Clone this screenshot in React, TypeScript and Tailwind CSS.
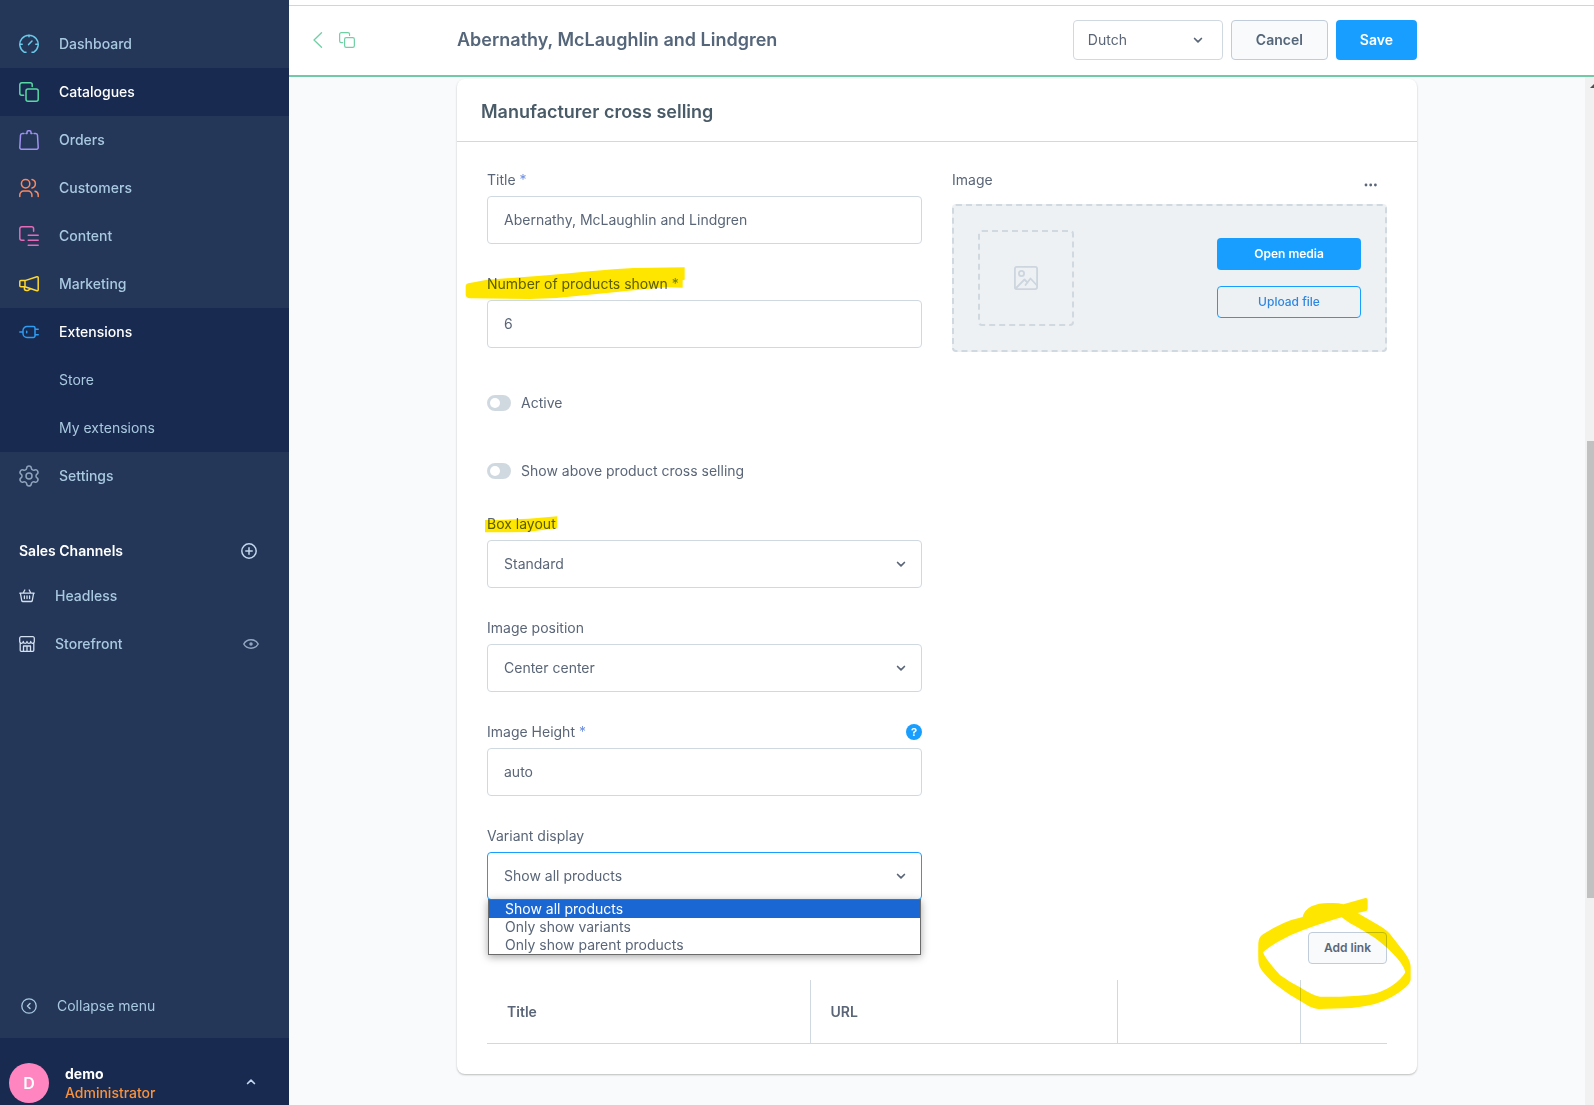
import React, { useState } from 'react';
import { Settings } from 'lucide-react';

const navItem = "flex h-12 items-center gap-5 pl-[19px] text-sm font-medium";

function Icon(props: { children: any, className?: string, box?: string }) {
    return (
        <svg
            viewBox={props.box || "0 0 20 20"}
            fill="none"
            stroke="currentColor"
            strokeWidth="1.5"
            strokeLinecap="round"
            strokeLinejoin="round"
            aria-hidden="true"
            className={`shrink-0 ${props.className || "size-5"}`}
        >
            {props.children}
        </svg>
    );
}

function DashboardIcon() {
    return (
        <Icon>
            <path d="M7 18.3H5.4a9.200 9.200 0 1 1 9.200 0H13M10 1v1.800M1 10.200h2.200M16.800 10.200H19M9.600 10.600 13 7" />
        </Icon>
    );
}

function CopyIcon(props: { className?: string }) {
    return (
        <Icon className={props.className}>
            <rect x="7" y="7" width="12.200" height="12.200" rx="2" />
            <path d="M4.600 13.200H2.800a2 2 0 0 1-2-2V2.800a2 2 0 0 1 2-2h8.400a2 2 0 0 1 2 2v1.600" />
        </Icon>
    );
}

function OrdersIcon() {
    return (
        <Icon>
            <path d="M5 3.500H3.400A1.900 1.900 0 0 0 1.500 5.300L.8 17.300a1.900 1.900 0 0 0 1.900 2h14.600a1.900 1.900 0 0 0 1.900-2L18.500 5.300a1.900 1.900 0 0 0-1.900-1.800H15M7 3.500h1V2.200A1.400 1.400 0 0 1 9.400.8h1.200A1.400 1.400 0 0 1 12 2.200v1.300h1" />
        </Icon>
    );
}

function CustomersIcon() {
    return (
        <Icon>
            <circle cx="6.600" cy="5.800" r="4.200" />
            <path d="M.8 18.600v-1.800a3.700 3.700 0 0 1 3.700-3.700h4.700a3.700 3.700 0 0 1 3.700 3.700v1.800M13 1.600a4.300 4.300 0 0 1 0 8.400M16 13.200a3.900 3.900 0 0 1 3.200 3.800v1.600" />
        </Icon>
    );
}

function ContentIcon() {
    return (
        <Icon>
            <path d="M5 14.200H2.800a2 2 0 0 1-2-2V2.800a2 2 0 0 1 2-2h9.800a2 2 0 0 1 2 2v2.500M9.200 9.200h10M9.200 14.200h10M9.200 19.200h10" />
        </Icon>
    );
}

function MarketingIcon() {
    return (
        <Icon>
            <path d="M6 6.600 17.900 2.700a1 1 0 0 1 1.300 1v12a1 1 0 0 1-1.300 1L6 12.800zM6 6.600H1.800a1 1 0 0 0-1 1v4.200a1 1 0 0 0 1 1H6M5.400 13v1.600a1.900 1.900 0 0 0 1.900 1.900h1.600a1.900 1.900 0 0 0 1.700-1.900" />
        </Icon>
    );
}

function PlugIcon() {
    return (
        <Icon>
            <path d="M.8 10H4M8 4.500h6.500a1.500 1.500 0 0 1 1.500 1.500v8a1.500 1.500 0 0 1-1.500 1.500H8a4 4 0 0 1-4-4v-3a4 4 0 0 1 4-4zM16 7.300h3.200M16 12.700h3.200M7.700 9.200v1.600" />
        </Icon>
    );
}

function BasketIcon() {
    return (
        <Icon box="0 0 16 16" className="size-4">
            <path strokeWidth="1.300" d="M.8 5.200h14.400M1.400 5.200l1.300 7.300a1.300 1.300 0 0 0 1.300 1h8a1.300 1.300 0 0 0 1.300-1l1.300-7.300M4.200 5 5.800 2M11.800 5 10.200 2M5.400 8v2.500M8 8v2.500M10.600 8v2.500" />
        </Icon>
    );
}

function StoreIcon() {
    return (
        <Icon box="0 0 16 16" className="size-4">
            <path strokeWidth="1.300" d="M.7 5.500V2.200A1.500 1.500 0 0 1 2.200.7h11.600a1.500 1.500 0 0 1 1.500 1.500v3.300a1.800 1.800 0 0 1-3.600 0 1.800 1.800 0 0 1-3.700 0 1.800 1.800 0 0 1-3.700 0 1.800 1.800 0 0 1-3.600 0zM1.200 7v7.300a1 1 0 0 0 1 1h11.600a1 1 0 0 0 1-1V7M4.500 15.200V10h7v5.200M8 10v5.200" />
        </Icon>
    );
}

function Chevron(props: { className?: string }) {
    return (
        <svg viewBox="0 0 12 12" fill="none" stroke="currentColor" strokeWidth="1.7" strokeLinecap="round" strokeLinejoin="round" aria-hidden="true" className={props.className}>
            <path d="M2.600 4.500 6 7.900l3.400-3.400" />
        </svg>
    );
}

const mainNav = [
    { label: "Dashboard", icon: DashboardIcon, color: "text-[#6ac8e8]" },
    { label: "Catalogues", icon: CopyIcon, color: "text-[#57d9a3]", active: true },
    { label: "Orders", icon: OrdersIcon, color: "text-[#a092f0]" },
    { label: "Customers", icon: CustomersIcon, color: "text-[#f88962]" },
    { label: "Content", icon: ContentIcon, color: "text-[#e56ab8]" },
    { label: "Marketing", icon: MarketingIcon, color: "text-[#ffd92e]" },
];

function Sidebar() {
    return (
        <aside className="flex w-[289px] shrink-0 flex-col bg-[#243758] text-[#a9c9e0]">
            <nav className="pt-5">
                {mainNav.map(({ label, icon: NavIcon, color, active }) => (
                    <a key={label} href="#" className={`${navItem} ${active ? "bg-[#182a4f] text-white" : ""}`}>
                        <span className={color}><NavIcon /></span>
                        {label}
                    </a>
                ))}
                <div className="bg-[#182a4f]">
                    <a href="#" className={`${navItem} text-white`}>
                        <span className="text-[#2f9cf4]"><PlugIcon /></span>
                        Extensions
                    </a>
                    <a href="#" className="flex h-12 items-center pl-[59px] text-sm">Store</a>
                    <a href="#" className="flex h-12 items-center pl-[59px] text-sm">My extensions</a>
                </div>
                <a href="#" className={navItem}>
                    <Settings className="-m-0.5 size-6 text-[#8fa3bb]" strokeWidth={1.5} />
                    Settings
                </a>
            </nav>

            <section className="pt-[27px] pl-[19px]">
                <div className="flex h-12 items-center justify-between pr-8">
                    <h2 className="text-sm font-semibold text-white">Sales Channels</h2>
                    <button type="button" aria-label="Add sales channel" className="text-[#c3d7ee]">
                        <Icon box="0 0 16 16" className="size-4">
                            <circle cx="8" cy="8" r="7.200" />
                            <path d="M8 4.800v6.400M4.800 8h6.400" />
                        </Icon>
                    </button>
                </div>
                <a href="#" className="-mt-[3px] flex h-12 items-center gap-5 text-sm font-medium">
                    <span className="text-[#d3e0f0]"><BasketIcon /></span>
                    Headless
                </a>
                <a href="#" className="flex h-12 items-center gap-5 pr-[30px] text-sm font-medium">
                    <span className="text-[#d3e0f0]"><StoreIcon /></span>
                    <span className="grow">Storefront</span>
                    <Icon box="0 0 16 16" className="size-4 text-[#93a8c2]">
                        <path d="M.8 8c3-5.600 11.400-5.600 14.400 0-3 5.600-11.400 5.600-14.400 0z" />
                        <circle cx="8" cy="8" r="1" fill="currentColor" />
                    </Icon>
                </a>
            </section>

            <button type="button" className="mt-auto flex h-16 items-center gap-5 pl-[21px] text-sm">
                <Icon box="0 0 16 16" className="size-4">
                    <circle cx="8" cy="8" r="7.200" strokeWidth="1.300" />
                    <path d="M9 5.500 6.500 8 9 10.500" />
                </Icon>
                Collapse menu
            </button>
            <footer className="flex h-[67px] items-end bg-[#182a4f] pb-0.5 pl-[9px]">
                <div className="flex size-10 items-center justify-center rounded-full bg-[#ff85c0] font-semibold text-white">D</div>
                <div className="grow pb-px pl-4 text-sm leading-[19px]">
                    <p className="font-bold text-white">demo</p>
                    <p className="font-medium text-[#f8923d]">Administrator</p>
                </div>
                <button type="button" aria-label="User menu" className="mr-8 self-center pt-[22px] text-[#c3d7ee]">
                    <Chevron className="size-3 rotate-180" />
                </button>
            </footer>
        </aside>
    );
}

function Header(props: { title: string }) {
    return (
        <header className="flex h-[77px] shrink-0 flex-col border-b-2 border-[#72c9a8] bg-white">
            <div className="h-[6px] shrink-0 border-b border-[#d1d5da]" />
            <div className="grid grow grid-cols-[1fr_minmax(0,960px)_1fr] items-center pr-[9px] pb-px">
                <div className="flex gap-4 pl-6 text-[#6fd0a4]">
                    <a href="#" aria-label="Back">
                        <Icon box="0 0 10 16" className="h-4 w-2.5"><path strokeWidth="1.300" d="M8.500.8 1 8l7.500 7.200" /></Icon>
                    </a>
                    <CopyIcon className="size-4" />
                </div>
                <div className="flex items-center gap-2">
                    <h1 className="grow text-lg font-semibold text-[#55667a]">{props.title}</h1>
                    <div className="relative text-[#5a6678]">
                        <select aria-label="Language" className="block h-10 w-[150px] appearance-none rounded border border-[#d1d9e0] bg-white pl-3.5 text-sm">
                            <option>Dutch</option>
                        </select>
                        <Chevron className="pointer-events-none absolute top-3.5 right-[19px] size-3" />
                    </div>
                    <button type="button" className="h-10 rounded border border-[#c0ccd9] bg-[#f8fafc] px-6 text-sm font-semibold text-[#55667a]">Cancel</button>
                    <button type="button" className="h-10 rounded bg-[#189eff] px-6 text-sm font-semibold text-white">Save</button>
                </div>
            </div>
        </header>
    );
}

// Marker strokes are multiplied over the text below them
function Marker(props: { d: string, box: string, className: string }) {
    return (
        <svg viewBox={props.box} fill="#ffe600" aria-hidden="true" className={`pointer-events-none absolute max-w-none mix-blend-multiply ${props.className}`}>
            <path fillRule="evenodd" d={props.d} />
        </svg>
    );
}

function Field(props: { id: string, label: string, required?: boolean, help?: boolean, marker?: any, children: any }) {
    return (
        <div className="flex flex-col gap-2">
            <div className="relative flex h-4 items-center justify-between">
                <label htmlFor={props.id} className="text-sm leading-4">
                    {props.label}
                    {props.required && <span className="text-[#6f8fe0]"> *</span>}
                </label>
                {props.help && (
                    <button type="button" aria-label="Help" className="flex size-4 items-center justify-center rounded-full bg-[#189eff] text-[11px] font-bold text-white">?</button>
                )}
                {props.marker}
            </div>
            {props.children}
        </div>
    );
}

function TextInput(props: { id: string, value: string }) {
    const [value, setValue] = useState(props.value);
    return (
        <input
            id={props.id}
            type="text"
            value={value}
            onChange={(e) => setValue(e.target.value)}
            className="h-12 w-full rounded border border-[#d1d9e0] bg-white px-4 pb-0.5 text-sm outline-none"
        />
    );
}

function SelectInput(props: { id: string, options: string[], open?: boolean }) {
    return (
        <div className="relative">
            <select
                id={props.id}
                className={`block h-12 w-full appearance-none rounded border bg-white px-4 text-sm outline-none ${props.open ? "border-[#189eff]" : "border-[#d1d9e0]"}`}
            >
                {props.options.map((option) => <option key={option}>{option}</option>)}
            </select>
            <Chevron className="pointer-events-none absolute top-[18px] right-[15px] size-3" />
            {props.open && (
                <ul role="listbox" className="absolute inset-x-px top-[47px] z-10 border border-[#6b6b6b] bg-white text-sm leading-[18px] shadow-[0_2px_8px_rgba(0,0,0,0.35)]">
                    {props.options.map((option, i) => (
                        <li key={option} role="option" aria-selected={i === 0} className={i === 0 ? "bg-[#1a66d2] px-4 text-white" : "px-4"}>{option}</li>
                    ))}
                </ul>
            )}
        </div>
    );
}

function Toggle(props: { label: string }) {
    return (
        <label className="flex h-4 items-center gap-2.5 text-sm">
            <input
                type="checkbox"
                role="switch"
                className="h-4 w-6 appearance-none rounded-full bg-[#d1d9e0] before:m-[3px] before:block before:size-2.5 before:rounded-full before:bg-white checked:bg-[#37d046] checked:before:ml-[11px]"
            />
            {props.label}
        </label>
    );
}

function MediaUpload() {
    return (
        <div className="flex flex-col">
            <div className="flex h-8 justify-between text-sm leading-4">
                <span>Image</span>
                <button type="button" aria-label="Media options" className="mr-2 h-6 pt-0.5">
                    <svg viewBox="0 0 16 16" fill="currentColor" className="size-4">
                        <circle cx="3" cy="8" r="1.400" />
                        <circle cx="7.700" cy="8" r="1.400" />
                        <circle cx="12.400" cy="8" r="1.400" />
                    </svg>
                </button>
            </div>
            <div className="flex items-center justify-between rounded border-2 border-dashed border-[#d1d9e0] bg-[#edf1f4] p-6">
                <div className="flex size-24 items-center justify-center rounded border-2 border-dashed border-[#d1d9e0] text-[#cdd5de]">
                    <Icon box="0 0 24 24" className="size-6">
                        <g strokeWidth="1.800">
                            <rect x=".9" y=".9" width="22.200" height="22.200" rx="2" />
                            <circle cx="7.500" cy="7.500" r="2.600" />
                            <path d="m1.500 22.500 9-9 3 3M11.500 19l5-6.500 6.500 7" />
                        </g>
                    </Icon>
                </div>
                <div className="flex w-36 flex-col gap-4">
                    <button type="button" className="h-8 rounded bg-[#189eff] text-xs font-semibold text-white">Open media</button>
                    <button type="button" className="h-8 rounded border border-[#189eff] text-xs font-medium text-[#2f86e0]">Upload file</button>
                </div>
            </div>
        </div>
    );
}

function Scrollbar() {
    return (
        <div className="flex w-[9px] shrink-0 flex-col overflow-hidden bg-[#f1f1f1] pl-0.5" aria-hidden="true">
            <svg viewBox="0 0 15 17" fill="#505050" className="h-[17px] w-[15px] shrink-0"><path d="M3 11 7.500 6.500 12 11z" /></svg>
            <div className="flex-[347]" />
            <div className="flex-[457] bg-[#c1c1c1]" />
            <div className="flex-[207]" />
        </div>
    );
}

export default function App() {
    return (
        <div className="flex min-h-screen bg-[#f9fafb] font-['Inter','Liberation_Sans',sans-serif]">
            <Sidebar />
            <div className="flex min-w-0 grow flex-col">
                <Header title="Abernathy, McLaughlin and Lindgren" />
                <div className="flex grow">
                    <main className="grow pt-0.5 pb-[30px] text-[#5a6678]">
                        <div className="mx-auto max-w-[960px] rounded-lg bg-white shadow-[0_1px_2px_rgba(0,0,0,0.25)]">
                            <h2 className="border-b border-[#d1d9e0] px-6 pt-[19px] pb-4 text-lg leading-[27px] font-semibold text-[#4a5b68]">Manufacturer cross selling</h2>
                            <div className="p-[30px]">
                                <div className="grid grid-cols-2 gap-[30px]">
                                    <div className="flex flex-col gap-8">
                                        <Field id="title" label="Title" required>
                                            <TextInput id="title" value="Abernathy, McLaughlin and Lindgren" />
                                        </Field>
                                        <Field
                                            id="count"
                                            label="Number of products shown"
                                            required
                                            marker={
                                                <Marker
                                                    className="-top-2.5 -left-[22px] h-[34px] w-[221px]"
                                                    box="45 318 663 102"
                                                    d="M47 378q1-8 12-9l53-10 188-14 120-11 70-6 60-4 154-2v37l-6 2v22l-50-1-88 8-120 12-120 12-80 3-180-2q-12-1-13-10z"
                                                />
                                            }
                                        >
                                            <TextInput id="count" value="6" />
                                        </Field>
                                        <div className="flex flex-col gap-[52px] pt-[15px] pb-[5px]">
                                            <Toggle label="Active" />
                                            <Toggle label="Show above product cross selling" />
                                        </div>
                                        <Field
                                            id="layout"
                                            label="Box layout"
                                            marker={
                                                <Marker
                                                    className="-top-px -left-[3px] h-[18px] w-[75px]"
                                                    box="42 405 225 54"
                                                    d="M45 420h40l90-4 87-7v36l-62 7-25 4-130 1z"
                                                />
                                            }
                                        >
                                            <SelectInput id="layout" options={["Standard"]} />
                                        </Field>
                                        <Field id="position" label="Image position">
                                            <SelectInput id="position" options={["Center center"]} />
                                        </Field>
                                        <Field id="height" label="Image Height" required help>
                                            <TextInput id="height" value="auto" />
                                        </Field>
                                        <Field id="variants" label="Variant display">
                                            <SelectInput id="variants" open options={["Show all products", "Only show variants", "Only show parent products"]} />
                                        </Field>
                                    </div>
                                    <MediaUpload />
                                </div>

                                <div className="flex justify-end pt-8 pb-4">
                                    <div className="relative">
                                        <button type="button" className="block h-8 rounded border border-[#c0ccd9] bg-[#f8fafc] px-[15px] text-xs font-semibold">Add link</button>
                                        <Marker
                                            className="-top-[35px] -left-[51px] h-[113px] w-[155px]"
                                            box="471 51 465 339"
                                            d="M796 54q7-1 7 6v26q0 7-7 8l-23 5 62 36q30 17 42 36l36 46q19 25 19 45v38q-3 12-15 22-42 36-92 50-50 12-90 13l-80 2q-18-1-38-14l-50-30q-30-22-50-37-40-38-41-56-2-12-1-60 0-18 14-27 60-40 119-52 4-20 26-32 25-12 60-10 20-1 36 4zM725 112q-40 11-115 38-40 14-76 35-30 18-44 31 0 14 50 69 30 22 60 37 40 26 60 28h60q60-2 100-8 40-10 70-35 22-20 26-31-7-26-40-58-20-20-50-43-50-32-76-45z"
                                        />
                                    </div>
                                </div>

                                <table className="w-full table-fixed border-b border-[#d1d9e0] text-left text-sm">
                                    <thead>
                                        <tr className="h-[63px]">
                                            <th className="w-[323px] border-r border-[#d1d9e0] px-5 pt-0.5 font-semibold">Title</th>
                                            <th className="w-[307px] border-r border-[#d1d9e0] px-5 pt-0.5 font-semibold">URL</th>
                                            <th className="w-[183px] border-r border-[#d1d9e0]" />
                                            <th />
                                        </tr>
                                    </thead>
                                </table>
                            </div>
                        </div>
                    </main>
                    <Scrollbar />
                </div>
            </div>
        </div>
    );
}
